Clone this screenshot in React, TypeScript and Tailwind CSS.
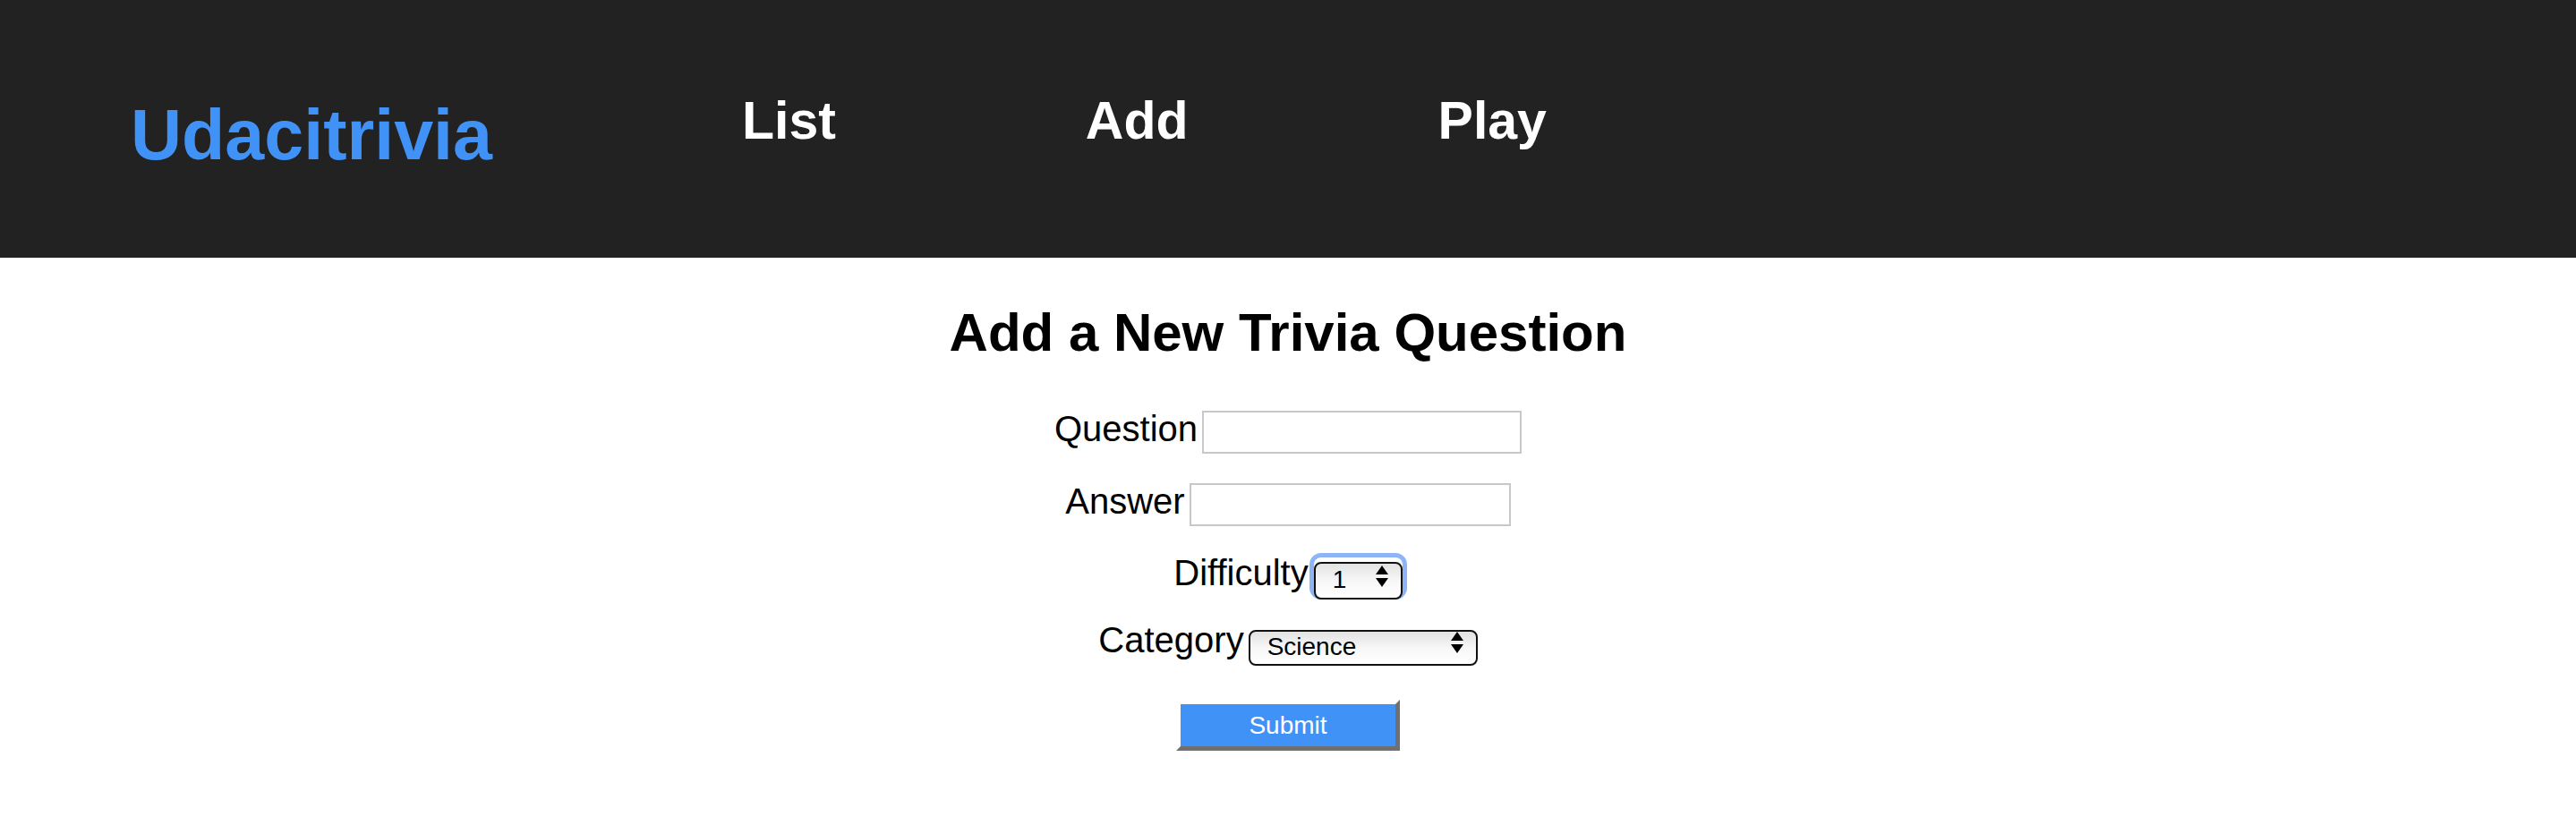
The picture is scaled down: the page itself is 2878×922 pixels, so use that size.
import { useState } from "react";

const navItems = [
  { label: "List", ml: "ml-[279px]" },
  { label: "Add", ml: "ml-[279px]" },
  { label: "Play", ml: "ml-[279px]" },
];

function Arrows() {
  return (
    <svg width="14" height="24" viewBox="0 0 14 24" className="block">
      <polygon points="0,10 7,0 14,10" fill="#000" />
      <polygon points="0,14 14,14 7,24" fill="#000" />
    </svg>
  );
}

function Dropdown({
  value,
  options,
  onChange,
  className,
}: {
  value: string;
  options: string[];
  onChange: (v: string) => void;
  className: string;
}) {
  return (
    <div className={`relative ${className}`}>
      <select
        value={value}
        onChange={(e) => onChange(e.target.value)}
        className="appearance-none w-full h-full rounded-[8px] border-2 border-[#111] bg-linear-to-b from-[#e2e2e2] via-[#f7f7f7] to-white pl-[19px] pb-[2px] text-[28px] leading-none text-black outline-none"
      >
        {options.map((o) => (
          <option key={o} value={o}>
            {o}
          </option>
        ))}
      </select>
      <div className="pointer-events-none absolute right-[16px] top-1/2 -translate-y-1/2">
        <Arrows />
      </div>
    </div>
  );
}

export default function App() {
  const [difficulty, setDifficulty] = useState("1");
  const [category, setCategory] = useState("Science");

  return (
    <div className="min-h-screen bg-white font-['Liberation_Sans',Arial,sans-serif] text-black">
      {/* Header */}
      <header className="flex items-start h-[288px] bg-[#222222] pl-[146px]">
        <div className="mt-[111px] text-[79px] leading-none font-bold text-[#4192f6]">
          Udacitrivia
        </div>
        {navItems.map((item) => (
          <div
            key={item.label}
            className={`${item.ml} mt-[106px] text-[59px] leading-none font-bold text-white`}
          >
            {item.label}
          </div>
        ))}
      </header>

      {/* Form */}
      <main className="flex flex-col items-center">
        <h2 className="mt-[54px] text-[60px] leading-none font-bold">
          Add a New Trivia Question
        </h2>

        <form className="flex flex-col items-center" onSubmit={(e) => e.preventDefault()}>
          <label className="mt-[57px] flex items-start gap-[5px] text-[40px] leading-none">
            Question
            <input
              type="text"
              className="w-[357px] h-[48px] border-2 border-[#c8c8c8] outline-none"
            />
          </label>

          <label className="mt-[33px] flex items-start gap-[5px] text-[40px] leading-none">
            Answer
            <input
              type="text"
              className="w-[359px] h-[48px] border-2 border-[#c8c8c8] outline-none"
            />
          </label>

          <label className="mt-[32px] flex items-start gap-[6px] text-[40px] leading-none">
            Difficulty
            <Dropdown
              value={difficulty}
              options={["1", "2", "3", "4", "5"]}
              onChange={setDifficulty}
              className="mt-[3px] w-[99px] h-[42px] rounded-[8px] ring-[5px] ring-[#8db5f5]"
            />
          </label>

          <label className="mt-[30px] flex items-start gap-[5px] text-[40px] leading-none">
            Category
            <Dropdown
              value={category}
              options={["Science", "Art", "Geography", "History", "Entertainment", "Sports"]}
              onChange={setCategory}
              className="mt-[3px] w-[256px] h-[40px]"
            />
          </label>

          <button
            type="submit"
            className="mt-[44px] w-[250px] h-[57px] border-[5px] border-t-white border-l-white border-r-[#707070] border-b-[#707070] bg-[#4192f6] text-[28px] leading-none text-white"
          >
            Submit
          </button>
        </form>
      </main>
    </div>
  );
}
